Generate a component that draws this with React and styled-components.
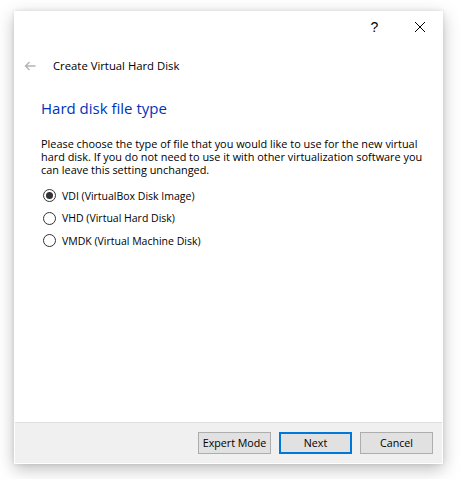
import React, { useState } from "react";
import styled, { createGlobalStyle } from "styled-components";

const Global = createGlobalStyle`
  html, body {
    margin: 0;
    background: #ffffff;
  }
  body {
    font-family: "Open Sans", "Noto Sans", sans-serif;
    font-size: 12px;
    color: #000;
  }
`;

const Pagina = styled.div`
  width: 462px;
  height: 479px;
  padding: 11px 0 0 14px;
  box-sizing: border-box;
`;

const Ventana = styled.div`
  width: 429px;
  height: 453px;
  box-sizing: border-box;
  border: 1px solid #ffffff;
  background: #ffffff;
  box-shadow: 0 5px 16px rgba(0, 0, 0, 0.26), 0 0 4px rgba(0, 0, 0, 0.1);
  display: flex;
  flex-direction: column;
`;

const BarraTitulo = styled.div`
  height: 30px;
  display: flex;
  justify-content: flex-end;
  align-items: center;
`;

const BotonTitulo = styled.div`
  width: 45px;
  height: 30px;
  display: flex;
  align-items: center;
  justify-content: center;
  font-family: "Liberation Sans", sans-serif;
  font-size: 14px;
  color: #000;
`;

const Cabecera = styled.div`
  display: flex;
  align-items: center;
  height: 47px;
  padding-left: 9px;
`;

const Flecha = styled.div`
  width: 14px;
  height: 14px;
  margin-right: 15px;
  display: flex;
  align-items: center;
`;

const TituloAsistente = styled.span`
  font-size: 11.3px;
`;

const Contenido = styled.div`
  flex: 1;
  padding: 0 20px 0 26px;
`;

const Encabezado = styled.h1`
  margin: 9px 0 0 0;
  font-weight: 400;
  font-size: 15px;
  color: #0033bb;
  line-height: 20px;
`;

const Parrafo = styled.p`
  margin: 19px 0 0 0;
  font-size: 10.9px;
  line-height: 13px;
  white-space: nowrap;
`;

const ListaOpciones = styled.div`
  margin-top: 13px;
  display: flex;
  flex-direction: column;
  gap: 9.5px;
`;

const Opcion = styled.label`
  display: flex;
  align-items: center;
  height: 13px;
  font-size: 10.5px;
  cursor: default;
`;

const Circulo = styled.span`
  width: 11px;
  height: 11px;
  margin: 0 6px 0 2px;
  border: 1px solid #333333;
  border-radius: 50%;
  display: flex;
  align-items: center;
  justify-content: center;

  &::after {
    content: "";
    width: 7px;
    height: 7px;
    border-radius: 50%;
    background: ${(p) => (p.$marcado ? "#333333" : "transparent")};
  }
`;

const Pie = styled.div`
  height: 40px;
  background: #f0f0f0;
  border-top: 1px solid #dfdfdf;
  display: flex;
  justify-content: flex-end;
  align-items: center;
  gap: 8px;
  padding-right: 9px;
`;

const Boton = styled.button`
  width: 73px;
  height: 22px;
  box-sizing: border-box;
  background: #e1e1e1;
  border: ${(p) => (p.$principal ? "2px solid #0078d7" : "1px solid #adadad")};
  font-family: "Open Sans", "Noto Sans", sans-serif;
  font-size: 10.7px;
  color: #000;
  padding: 0;
`;

const opciones = [
  "VDI (VirtualBox Disk Image)",
  "VHD (Virtual Hard Disk)",
  "VMDK (Virtual Machine Disk)",
];

export default function App() {
  const [elegida, setElegida] = useState(0);

  return (
    <Pagina>
      <Global />
      <Ventana>
        <BarraTitulo>
          <BotonTitulo>?</BotonTitulo>
          <BotonTitulo>
            <svg width="12" height="12" viewBox="0 0 12 12">
              <path d="M1 1 L11 11 M11 1 L1 11" stroke="#000" strokeWidth="1" />
            </svg>
          </BotonTitulo>
        </BarraTitulo>
        <Cabecera>
          <Flecha>
            <svg width="12" height="10" viewBox="0 0 12 10">
              <path d="M11.5 5 H1.5 M5.5 1 L1.5 5 L5.5 9" stroke="#b4b4b4" strokeWidth="1.4" fill="none" />
            </svg>
          </Flecha>
          <TituloAsistente>Create Virtual Hard Disk</TituloAsistente>
        </Cabecera>
        <Contenido>
          <Encabezado>Hard disk file type</Encabezado>
          <Parrafo>
            Please choose the type of file that you would like to use for the new virtual
            <br />
            hard disk. If you do not need to use it with other virtualization software you
            <br />
            can leave this setting unchanged.
          </Parrafo>
          <ListaOpciones>
            {opciones.map((texto, i) => (
              <Opcion key={texto} onClick={() => setElegida(i)}>
                <Circulo $marcado={elegida === i} />
                {texto}
              </Opcion>
            ))}
          </ListaOpciones>
        </Contenido>
        <Pie>
          <Boton>Expert Mode</Boton>
          <Boton $principal>Next</Boton>
          <Boton>Cancel</Boton>
        </Pie>
      </Ventana>
    </Pagina>
  );
}
